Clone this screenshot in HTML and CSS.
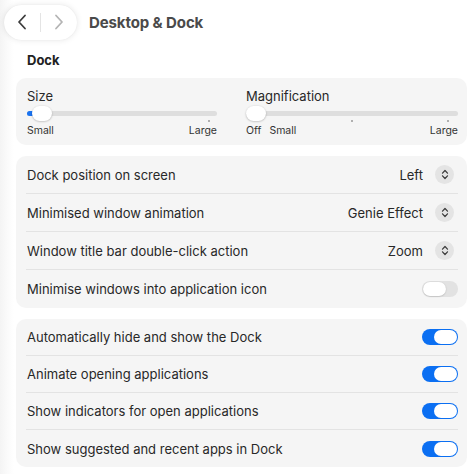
FILE: index.html
```html
<!DOCTYPE html>
<html>
<head>
<meta charset="utf-8">
<link rel="stylesheet" href="styles.css">
</head>
<body>
<div class="page">
  <header class="topbar">
    <div class="nav">
      <span class="navbtn">
        <svg width="12" height="16" viewBox="0 0 12 16"><path d="M9 1.5 L3 8 L9 14.5" fill="none" stroke="#3c3c3c" stroke-width="1.8" stroke-linecap="round" stroke-linejoin="round"/></svg>
      </span>
      <span class="navsep"></span>
      <span class="navbtn">
        <svg width="12" height="16" viewBox="0 0 12 16"><path d="M3 1.5 L9 8 L3 14.5" fill="none" stroke="#b4b4b4" stroke-width="1.8" stroke-linecap="round" stroke-linejoin="round"/></svg>
      </span>
    </div>
    <h1 class="title">Desktop &amp; Dock</h1>
  </header>

  <main class="content">
    <h2 class="section">Dock</h2>

    <section class="card sliders">
      <div class="slider-group">
        <div class="slabel">Size</div>
        <div class="track">
          <div class="fill" style="width:8px"></div>
          <div class="thumb thumb-size"></div>
          <span class="tick" style="left:181px"></span>
        </div>
        <div class="scale"><span>Small</span><span>Large</span></div>
      </div>
      <div class="slider-group">
        <div class="slabel">Magnification</div>
        <div class="track">
          <div class="thumb thumb-mag"></div>
          <span class="tick" style="left:105px"></span>
          <span class="tick" style="left:201px"></span>
        </div>
        <div class="scale"><span><span class="off">Off</span>Small</span><span>Large</span></div>
      </div>
    </section>

    <section class="card list">
      <div class="row">
        <span class="label">Dock position on screen</span>
        <span class="value">Left<span class="stepper"><svg width="8" height="11" viewBox="0 0 8 11"><path d="M1.5 4.2 L4 1.5 L6.5 4.2 M1.5 6.8 L4 9.5 L6.5 6.8" fill="none" stroke="#3a3a3a" stroke-width="1.2" stroke-linecap="round" stroke-linejoin="round"/></svg></span></span>
      </div>
      <div class="row">
        <span class="label">Minimised window animation</span>
        <span class="value">Genie Effect<span class="stepper"><svg width="8" height="11" viewBox="0 0 8 11"><path d="M1.5 4.2 L4 1.5 L6.5 4.2 M1.5 6.8 L4 9.5 L6.5 6.8" fill="none" stroke="#3a3a3a" stroke-width="1.2" stroke-linecap="round" stroke-linejoin="round"/></svg></span></span>
      </div>
      <div class="row">
        <span class="label">Window title bar double-click action</span>
        <span class="value">Zoom<span class="stepper"><svg width="8" height="11" viewBox="0 0 8 11"><path d="M1.5 4.2 L4 1.5 L6.5 4.2 M1.5 6.8 L4 9.5 L6.5 6.8" fill="none" stroke="#3a3a3a" stroke-width="1.2" stroke-linecap="round" stroke-linejoin="round"/></svg></span></span>
      </div>
      <div class="row">
        <span class="label">Minimise windows into application icon</span>
        <span class="toggle"><span class="knob"></span></span>
      </div>
    </section>

    <section class="card list list2">
      <div class="row">
        <span class="label">Automatically hide and show the Dock</span>
        <span class="toggle on"><span class="knob"></span></span>
      </div>
      <div class="row">
        <span class="label">Animate opening applications</span>
        <span class="toggle on"><span class="knob"></span></span>
      </div>
      <div class="row">
        <span class="label">Show indicators for open applications</span>
        <span class="toggle on"><span class="knob"></span></span>
      </div>
      <div class="row">
        <span class="label">Show suggested and recent apps in Dock</span>
        <span class="toggle on"><span class="knob"></span></span>
      </div>
    </section>
  </main>
</div>
</body>
</html>
```

FILE: styles.css
```css
* { box-sizing: border-box; }
html, body { margin: 0; padding: 0; }
body {
  background: #ffffff;
  font-family: Inter, "Noto Sans", "Liberation Sans", sans-serif;
  color: #282828;
  font-size: 13px;
  width: 473px;
  height: 474px;
  overflow: hidden;
}
.page {
  background: linear-gradient(to right, #f4f4f4 0px, #fbfbfb 8px, #ffffff 14px);
  height: 474px;
}
.topbar {
  display: flex;
  align-items: center;
  height: 43px;
  padding-left: 4px;
  padding-top: 1px;
}
.nav {
  display: flex;
  align-items: center;
  width: 73px;
  height: 35px;
  border-radius: 18px;
  background: #ffffff;
  box-shadow: 0 0 6px rgba(0,0,0,0.10), 0 0 1px rgba(0,0,0,0.08);
}
.navbtn {
  flex: 1;
  display: flex;
  justify-content: center;
  align-items: center;
}
.navsep {
  width: 1px;
  height: 19px;
  background: #e4e4e4;
}
.title {
  margin: 0 0 0 12px;
  font-size: 15px;
  font-weight: 700;
  color: #4a4a4a;
  letter-spacing: -0.1px;
}
.content {
  padding: 0 6px 0 16px;
}
.section {
  margin: 0;
  padding: 9px 0 0 11px;
  height: 35px;
  font-size: 13px;
  font-weight: 700;
  color: #222;
}
.card {
  background: #f5f5f5;
  border-radius: 10px;
}
.sliders {
  display: grid;
  grid-template-columns: 190px 212px;
  column-gap: 29px;
  padding: 10px 9px 0 11px;
  height: 67px;
}
.slabel {
  line-height: 16px;
  height: 16px;
}
.track {
  position: relative;
  margin-top: 7px;
  height: 5px;
  border-radius: 3px;
  background: #dedede;
}
.fill {
  position: absolute;
  left: 0; top: 0; bottom: 0;
  background: #1a73f0;
  border-radius: 3px 0 0 3px;
}
.thumb {
  position: absolute;
  top: -5px;
  width: 20px;
  height: 15px;
  border-radius: 8px;
  background: #fff;
  box-shadow: 0 0.5px 2px rgba(0,0,0,0.28);
}
.thumb-size { left: 5px; }
.thumb-mag { left: 0; }
.tick {
  position: absolute;
  top: 9px;
  width: 2px;
  height: 2px;
  background: #b0b0b0;
}
.scale {
  display: flex;
  justify-content: space-between;
  margin-top: 8px;
  font-size: 10.5px;
  line-height: 14px;
  color: #333;
}
.off { margin-right: 8px; }
.list {
  margin-top: 11px;
  padding: 0 9px 0 10px;
}
.row {
  display: flex;
  align-items: center;
  justify-content: space-between;
  height: 38px;
  padding-left: 1px;
  border-bottom: 1px solid #e3e3e3;
}
.row:last-child { border-bottom: none; }
.list2 .row { height: 37px; }
.value {
  display: flex;
  align-items: center;
}
.stepper {
  display: inline-flex;
  align-items: center;
  justify-content: center;
  width: 19px;
  height: 19px;
  border-radius: 50%;
  background: #e4e4e4;
  margin-left: 12px;
  margin-right: 4px;
}
.toggle {
  display: flex;
  align-items: center;
  width: 36px;
  height: 16px;
  border-radius: 8px;
  background: #e2e2e2;
  padding: 1px;
}
.toggle .knob {
  width: 23px;
  height: 14px;
  border-radius: 7px;
  background: #fff;
  box-shadow: 0 0.5px 1.5px rgba(0,0,0,0.22);
}
.toggle.on {
  background: #0b6ff2;
  justify-content: flex-end;
}
.toggle.on .knob { box-shadow: none; }
```
